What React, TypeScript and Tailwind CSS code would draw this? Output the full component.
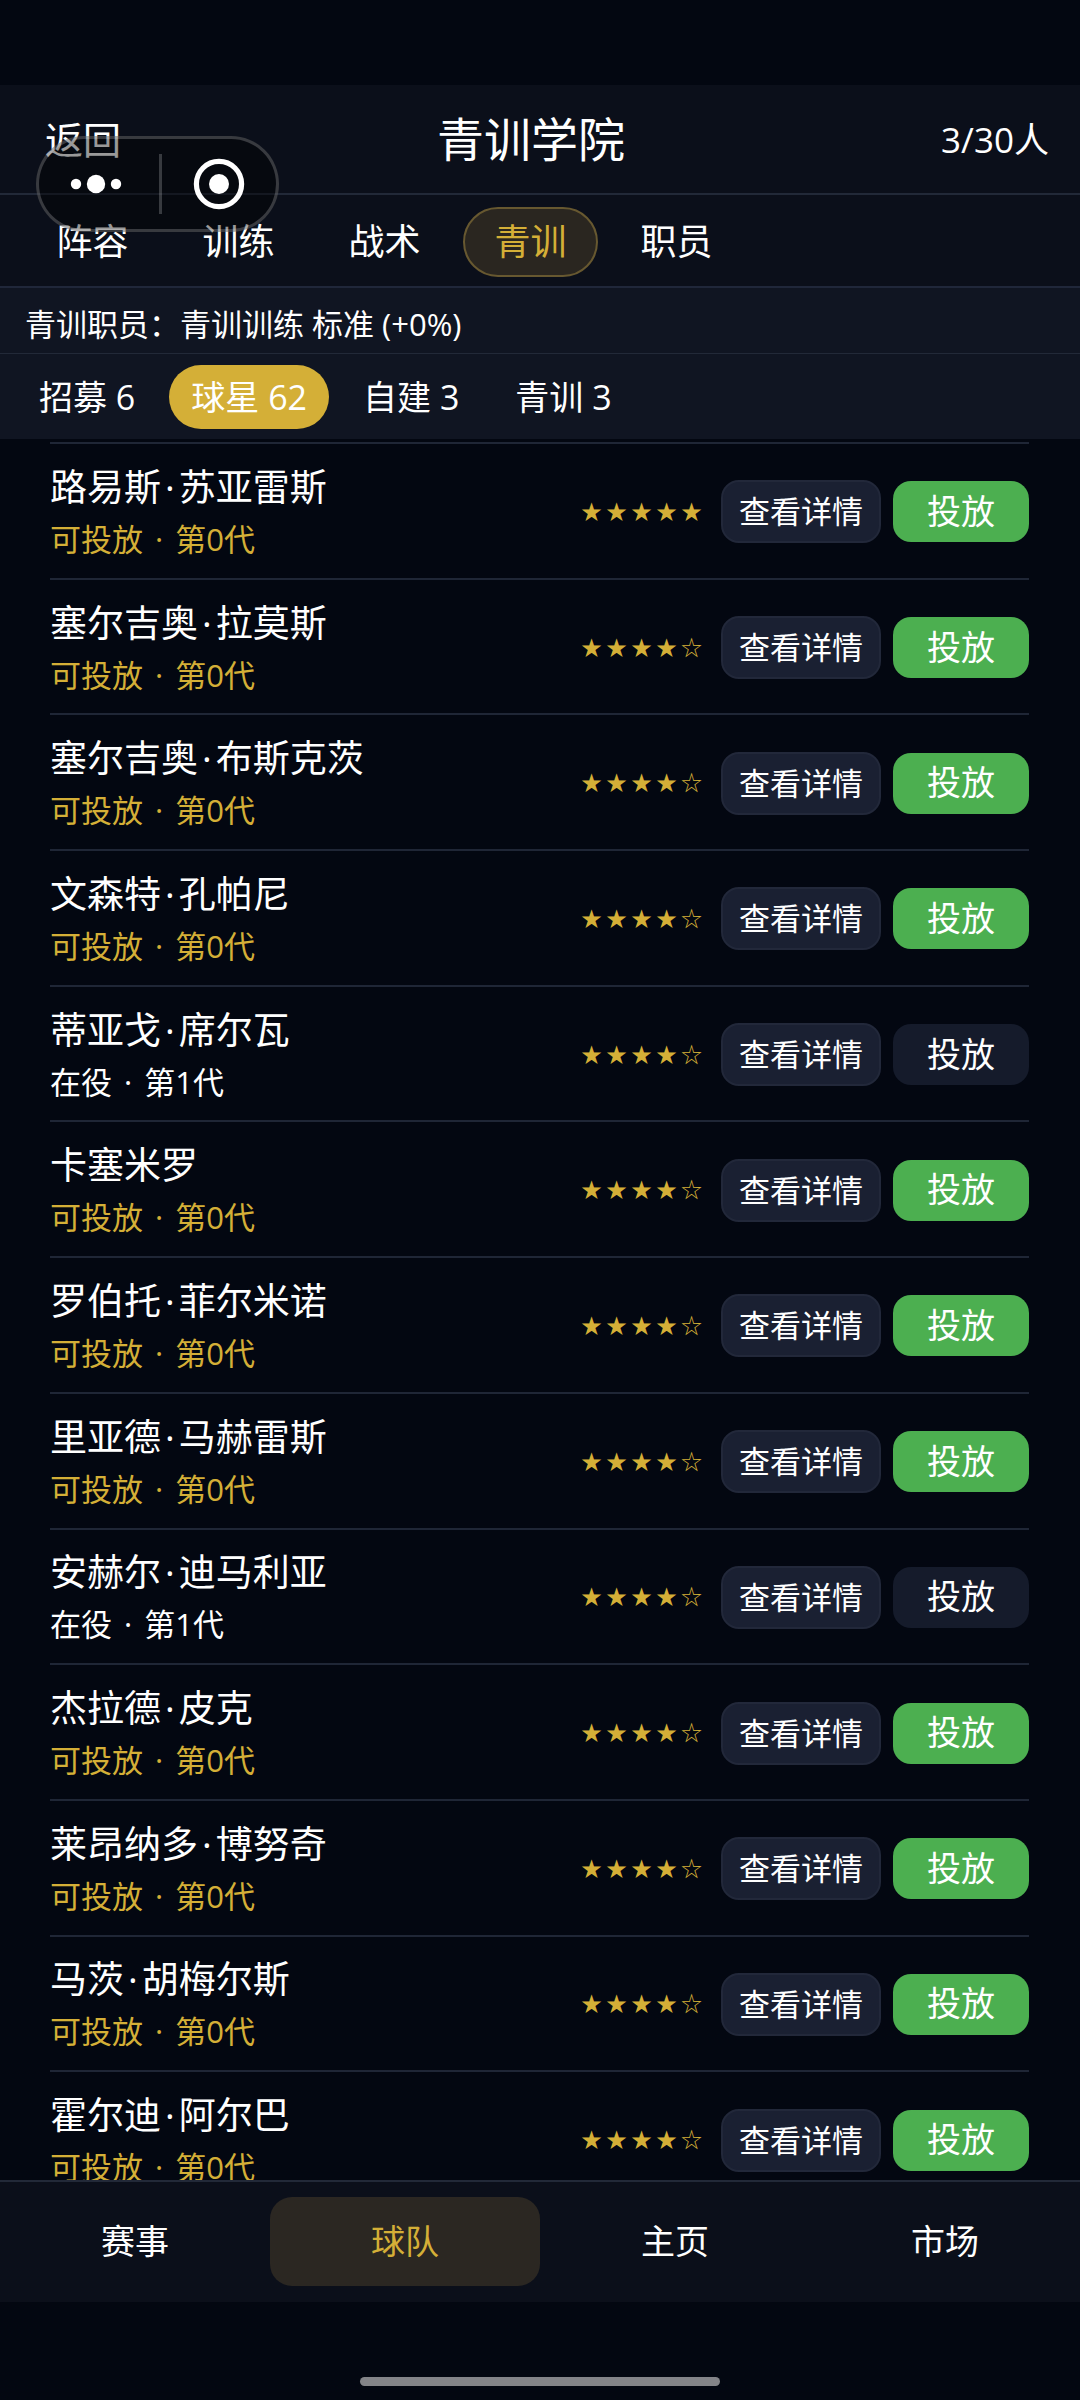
import { useState } from 'react';
import clsx from 'clsx';

type Player = Readonly<{
  name: string[];
  stars: number;
  active?: boolean;
}>;

const TABS = ['阵容', '训练', '战术', '青训', '职员'];

const GROUPS = [
  { label: '招募', count: 6 },
  { label: '球星', count: 62 },
  { label: '自建', count: 3 },
  { label: '青训', count: 3 },
];

const NAV = ['赛事', '球队', '主页', '市场'];

const PLAYERS: Player[] = [
  { name: ['路易斯', '苏亚雷斯'], stars: 5 },
  { name: ['塞尔吉奥', '拉莫斯'], stars: 4 },
  { name: ['塞尔吉奥', '布斯克茨'], stars: 4 },
  { name: ['文森特', '孔帕尼'], stars: 4 },
  { name: ['蒂亚戈', '席尔瓦'], stars: 4, active: true },
  { name: ['卡塞米罗'], stars: 4 },
  { name: ['罗伯托', '菲尔米诺'], stars: 4 },
  { name: ['里亚德', '马赫雷斯'], stars: 4 },
  { name: ['安赫尔', '迪马利亚'], stars: 4, active: true },
  { name: ['杰拉德', '皮克'], stars: 4 },
  { name: ['莱昂纳多', '博努奇'], stars: 4 },
  { name: ['马茨', '胡梅尔斯'], stars: 4 },
  { name: ['霍尔迪', '阿尔巴'], stars: 4 },
];

function Capsule() {
  return (
    <div className="absolute left-9 top-[136px] flex h-24 w-[243px] items-center rounded-full border-3 border-white/20 bg-black/40">
      <button type="button" aria-label="更多" className="flex flex-1 justify-center pr-1.5">
        <svg width="52" height="20" viewBox="0 0 52 20" fill="white">
          <circle cx="6" cy="10" r="5.2" />
          <circle cx="26" cy="10" r="9.2" />
          <circle cx="46" cy="10" r="5.2" />
        </svg>
      </button>
      <span className="h-[60px] w-[3px] bg-white/20" />
      <button type="button" aria-label="关闭" className="flex flex-1 justify-center">
        <svg width="52" height="52" viewBox="0 0 52 52">
          <circle cx="26" cy="26" r="22.6" fill="none" stroke="white" strokeWidth="5.2" />
          <circle cx="26" cy="26" r="10" fill="white" />
        </svg>
      </button>
    </div>
  );
}

function Dot() {
  return <span className="mx-1">·</span>;
}

function Stars({ count }: Readonly<{ count: number }>) {
  return (
    <div className="mr-[17px] flex pb-0.5 text-[21px] leading-6 text-[#d4af37]">
      {[1, 2, 3, 4, 5].map((n) => (
        <span key={n} className="w-[25px] text-center">
          {n <= count ? '★' : '☆'}
        </span>
      ))}
    </div>
  );
}

function PlayerRow({ player }: Readonly<{ player: Player }>) {
  const [first, last] = player.name;

  return (
    <li className="flex items-center border-b-2 border-[#1f2636] pt-0.5">
      <div className="flex-1 pt-0.5">
        <div className="text-[37px] leading-[53px]">
          {first}
          {last ? <Dot /> : null}
          {last}
        </div>
        <div
          className={clsx(
            'text-[31px] leading-[53px]',
            !player.active && 'text-[#d4af37]',
          )}
        >
          {player.active ? '在役' : '可投放'} <Dot /> 第{player.active ? 1 : 0}代
        </div>
      </div>
      <Stars count={player.stars} />
      <button
        type="button"
        className="mr-3 h-[63px] w-40 rounded-[18px] border-2 border-[#22283a] bg-[#1a2032] text-[31px] leading-none"
      >
        查看详情
      </button>
      <button
        type="button"
        disabled={player.active}
        className="h-[61px] w-34 rounded-[18px] bg-[#4caf50] pb-0.5 text-[34px] leading-none disabled:bg-[#151b2b]"
      >
        投放
      </button>
    </li>
  );
}

export default function App() {
  const [tab, setTab] = useState('青训');
  const [group, setGroup] = useState('球星');
  const [page, setPage] = useState('球队');

  return (
    <div className="relative flex h-screen flex-col bg-[#030711] pt-[85px] font-['Open_Sans','Noto_Sans_CJK_SC',sans-serif] text-white">
      <header className="flex h-[110px] shrink-0 items-center justify-between border-b-2 border-[#222938] bg-[#0b0f1a] px-[31px]">
        <button type="button" className="pl-3.5 text-[38px] leading-none">
          返回
        </button>
        <h1 className="text-[47px] leading-none">青训学院</h1>
        <span className="text-[35px] leading-none">3/30人</span>
      </header>

      <nav className="flex shrink-0 gap-[11px] border-b-2 border-[#20273a] bg-[#0b0f1a] px-[25px] pb-[9px] pt-3">
        {TABS.map((name) => (
          <button
            key={name}
            type="button"
            onClick={() => setTab(name)}
            className={clsx(
              'h-[70px] w-[135px] rounded-full border-2 text-[36px] leading-none',
              name === tab
                ? 'border-[#675830] bg-[#2a2620] text-[#d4af37]'
                : 'border-transparent',
            )}
          >
            {name}
          </button>
        ))}
      </nav>

      <p className="shrink-0 border-b border-[#222938] bg-[#101522] px-[25px] pb-[3px] pt-2.5 text-[31px] leading-[52px]">
        青训职员：青训训练 标准 (+0%)
      </p>

      <div className="flex shrink-0 gap-3 bg-[#101522] px-[17px] pb-2.5 pt-[11px]">
        {GROUPS.map(({ label, count }) => (
          <button
            key={label}
            type="button"
            onClick={() => setGroup(label)}
            className={clsx(
              'h-16 rounded-full px-[22px] text-[34px] leading-none',
              label === group && 'bg-[#d4af37]',
            )}
          >
            {label} {count}
          </button>
        ))}
      </div>

      <main className="flex min-h-0 flex-1 flex-col overflow-hidden pl-[50px] pr-[51px] pt-[3px]">
        <ul className="-mb-7 grid flex-1 auto-rows-fr border-t-2 border-[#1f2636]">
          {PLAYERS.map((player) => (
            <PlayerRow key={player.name.join('')} player={player} />
          ))}
        </ul>
      </main>

      <nav className="z-10 flex shrink-0 border-t-2 border-[#222938] bg-[#0b0f1a] pb-4 pt-[15px]">
        {NAV.map((name) => (
          <button
            key={name}
            type="button"
            onClick={() => setPage(name)}
            className={clsx(
              'h-[89px] flex-1 rounded-[22px] pb-0.5 text-[34px] leading-none',
              name === page && 'bg-[#2b2722] text-[#d4af37]',
            )}
          >
            {name}
          </button>
        ))}
      </nav>

      <div className="flex h-[98px] shrink-0 items-end justify-center pb-3.5">
        <span className="h-[9px] w-1/3 rounded-full bg-[#838488]" />
      </div>

      <Capsule />
    </div>
  );
}
